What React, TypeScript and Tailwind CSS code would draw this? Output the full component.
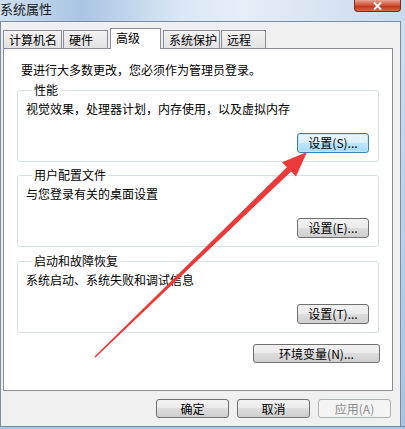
import type { ReactNode } from 'react'

const font = { fontFamily: '"Noto Sans CJK SC", "Liberation Sans", sans-serif' }

function WinButton({ children, className = '', focused = false, disabled = false }: { children: ReactNode; className?: string; focused?: boolean; disabled?: boolean }) {
  let skin = 'border-[#707070] bg-[linear-gradient(#f2f2f2_0%,#ebebeb_50%,#dddddd_50%,#cfcfcf_100%)] text-black'
  if (focused) skin = 'border-[#3c7fb1] bg-[linear-gradient(#eaf6fd_0%,#d9f0fc_50%,#bee6fd_50%,#a7d9f5_100%)] text-black shadow-[inset_0_0_0_1px_#c4e5f6]'
  if (disabled) skin = 'border-[#adb2b5] bg-[#f4f4f4] text-[#8a8a8a]'
  return (
    <div className={`flex items-center justify-center rounded-[3px] border text-[12px] leading-none ${skin} ${className}`}>
      {children}
    </div>
  )
}

function Group({ title, desc, btn, className = '' }: { title: string; desc: string; btn: ReactNode; className?: string }) {
  return (
    <fieldset className={`rounded-[3px] border border-[#d5dfe5] pl-[8px] pr-[9px] pb-[8px] ${className}`}>
      <legend className="ml-[6px] px-[2px] text-[12px] leading-[16px]">{title}</legend>
      <div className="text-[12px] leading-[16px] mt-[3px]">{desc}</div>
      <div className="flex justify-end mt-[16px]">{btn}</div>
    </fieldset>
  )
}

const tabs = ['计算机名', '硬件', '高级', '系统保护', '远程']
const tabW = [59, 45, 51, 57, 45]

export default function App() {
  return (
    <div className="relative w-[405px] h-[429px] overflow-hidden flex flex-col bg-[#f0f0f0] text-black" style={font}>
      {/* title bar */}
      <div className="h-[21px] shrink-0 flex items-start justify-between bg-[linear-gradient(90deg,#cfe0f1_0%,#a9c5e3_20%,#dbe8f5_45%,#e6eef7_60%,#d8e4f1_80%,#c9dbee_100%)]">
        <span className="text-[13px] leading-[16px] mt-[1px] text-[#1b1b1b]">系统属性</span>
        <div className="mr-[4px] w-[47px] h-[12px] rounded-b-[4px] border border-t-0 border-[#7a2a1e] bg-[linear-gradient(#e8a493_0%,#d2573c_45%,#c13a1c_60%,#d66a45_100%)] flex items-center justify-center">
          <svg width="9" height="8" viewBox="0 0 9 8">
            <path d="M1 0.5 L8 7.5 M8 0.5 L1 7.5" stroke="#fff" strokeWidth="2" />
          </svg>
        </div>
      </div>

      <div className="flex-1 flex">
        <div className="flex-1 flex flex-col border-t border-l border-[#7c8da3] bg-[#f0f0f0]">
          {/* tabs */}
          <div className="flex items-end h-[26px] pl-[2px] gap-[1px]">
            {tabs.map((t, i) =>
              i === 2 ? (
                <div key={t} style={{ width: tabW[i] }} className="relative z-10 mx-[1px] h-[21px] -mb-[1px] border border-b-0 border-[#898c95] bg-white flex items-start pl-[5px] pt-[1px] text-[12px] leading-[16px]">
                  {t}
                </div>
              ) : (
                <div key={t} style={{ width: tabW[i] }} className="h-[18px] border border-b-0 border-[#898c95] bg-[linear-gradient(#f2f2f2,#e3e3e3)] flex items-center pl-[5px] text-[12px] leading-[16px]">
                  {t}
                </div>
              )
            )}
          </div>

          {/* panel */}
          <div className="ml-[2px] w-[390px] h-[343px] border border-[#898c95] bg-white px-[13px] pt-[13px]">
            <div className="pl-[4px] text-[12px] leading-[16px]">要进行大多数更改，您必须作为管理员登录。</div>
            <Group
              className="mt-[4px]"
              title="性能"
              desc="视觉效果，处理器计划，内存使用，以及虚拟内存"
              btn={<WinButton focused className="w-[72px] h-[20px]">设置(S)...</WinButton>}
            />
            <Group
              className="mt-[5px]"
              title="用户配置文件"
              desc="与您登录有关的桌面设置"
              btn={<WinButton className="w-[72px] h-[20px]">设置(E)...</WinButton>}
            />
            <Group
              className="mt-[6px]"
              title="启动和故障恢复"
              desc="系统启动、系统失败和调试信息"
              btn={<WinButton className="w-[72px] h-[20px]">设置(T)...</WinButton>}
            />
            <div className="flex justify-end -mr-[1px] mt-[11px]">
              <WinButton className="w-[127px] h-[19px]">环境变量(N)...</WinButton>
            </div>
          </div>

          {/* dialog buttons */}
          <div className="flex justify-end gap-[8px] pr-[9px] mt-[8px]">
            <WinButton className="w-[73px] h-[19px]">确定</WinButton>
            <WinButton className="w-[73px] h-[19px]">取消</WinButton>
            <WinButton disabled className="w-[73px] h-[19px]">应用(A)</WinButton>
          </div>
        </div>
        <div className="w-[5px] border-l border-[#7c8da3] bg-[linear-gradient(#cfe0f1,#a6c4e3)]" />
      </div>
      <div className="h-[3px] shrink-0 border-t border-[#7c8da3] bg-[#a6c4e3]" />

      {/* red annotation arrow */}
      <svg className="absolute inset-0 pointer-events-none" width="405" height="429">
        <polygon
          points="94.5,356.5 286.9,167.2 282,162.2 307,152 296,176.6 291.1,171.6 95.5,357.5"
          fill="#ec3a3a"
        />
      </svg>
    </div>
  )
}
